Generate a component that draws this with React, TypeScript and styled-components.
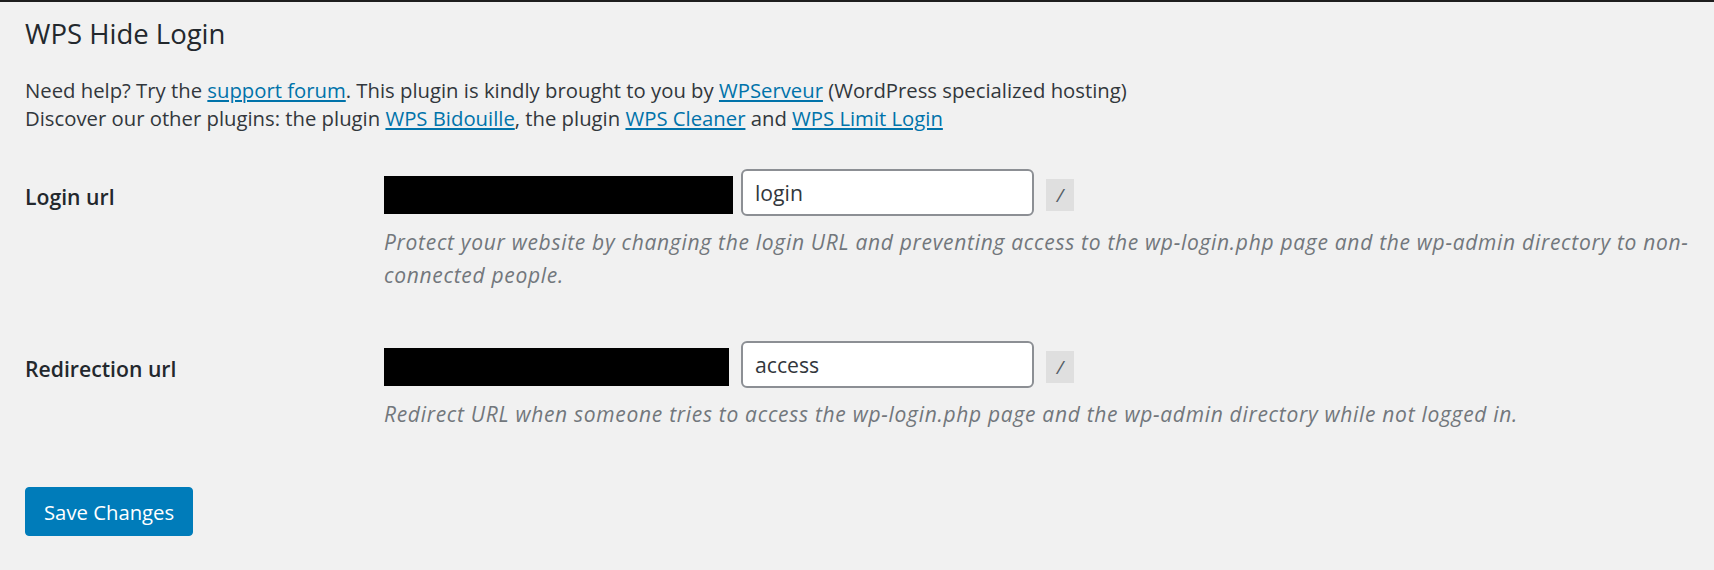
import React from "react";
import styled, { createGlobalStyle } from "styled-components";

const GlobalStyle = createGlobalStyle`
  html, body {
    margin: 0;
    padding: 0;
    background: #f1f1f1;
  }
  body {
    font-family: "Open Sans", "Noto Sans", "Liberation Sans", sans-serif;
    color: #23282d;
  }
  * { box-sizing: border-box; }
`;

const Page = styled.div`
  border-top: 2px solid #1e1e1e;
  padding: 0 6px 40px 25px;
  min-height: 570px;
`;

const Title = styled.h1`
  margin: 16px 0 0;
  font-size: 27.5px;
  line-height: 32px;
  font-weight: 400;
  color: #23282d;
`;

const Intro = styled.p`
  margin: 26px 0 0;
  font-size: 20.3px;
  line-height: 28px;
  color: #32373c;
`;

const Link = styled.a`
  color: #0073aa;
  text-decoration: underline;
`;

const FormTable = styled.div`
  display: flex;
  flex-direction: column;
`;

const Row = styled.div<{ $top: number }>`
  display: flex;
  margin-top: ${(p) => p.$top}px;
`;

const Label = styled.label`
  width: 359px;
  flex: none;
  padding-top: 15px;
  font-size: 21.2px;
  line-height: 26px;
  font-weight: 600;
  color: #23282d;
`;

const Field = styled.div`
  flex: 1;
  min-width: 0;
`;

const FieldLine = styled.div`
  display: flex;
  align-items: flex-start;
`;

const Redacted = styled.span<{ $w: number }>`
  display: block;
  width: ${(p) => p.$w}px;
  height: 38px;
  margin-top: 7px;
  background: #000;
`;

const TextInput = styled.input<{ $gap: number }>`
  width: 293px;
  height: 47px;
  margin: 0 0 0 ${(p) => p.$gap}px;
  padding: 0 12px;
  border: 2px solid #8c8f94;
  border-radius: 6px;
  background: #fff;
  font-family: "Open Sans", "Noto Sans", sans-serif;
  font-size: 21.2px;
  color: #32373c;
  outline: none;
`;

const Slash = styled.span`
  display: inline-flex;
  align-items: center;
  justify-content: center;
  width: 28px;
  height: 32px;
  margin: 10px 0 0 12px;
  background: #dfdfdf;
  color: #555d66;
  font-size: 19px;
  font-style: italic;
`;

const Description = styled.p`
  margin: 10px 0 0;
  font-size: 21px;
  letter-spacing: 0.7px;
  line-height: 33px;
  font-style: italic;
  color: #72777c;
`;

const SaveButton = styled.button`
  margin-top: 56px;
  height: 49px;
  padding: 0 18px;
  background: #007cba;
  border: 1px solid #007cba;
  border-radius: 4px;
  color: #fff;
  font-family: "Open Sans", "Noto Sans", sans-serif;
  font-size: 20.3px;
  cursor: pointer;
`;

export default function App() {
  return (
    <>
      <GlobalStyle />
      <Page>
        <Title>WPS Hide Login</Title>
        <Intro>
          Need help? Try the <Link href="#">support forum</Link>. This plugin is kindly brought to you by{" "}
          <Link href="#">WPServeur</Link> (WordPress specialized hosting)
          <br />
          Discover our other plugins: the plugin <Link href="#">WPS Bidouille</Link>, the plugin{" "}
          <Link href="#">WPS Cleaner</Link> and <Link href="#">WPS Limit Login</Link>
        </Intro>
        <FormTable>
          <Row $top={37}>
            <Label>Login url</Label>
            <Field>
              <FieldLine>
                <Redacted $w={349} />
                <TextInput $gap={8} defaultValue="login" />
                <Slash>/</Slash>
              </FieldLine>
              <Description>
                Protect your website by changing the login URL and preventing access to the wp-login.php page and the
                wp-admin directory to non-<wbr />connected people.
              </Description>
            </Field>
          </Row>
          <Row $top={49}>
            <Label>Redirection url</Label>
            <Field>
              <FieldLine>
                <Redacted $w={345} />
                <TextInput $gap={12} defaultValue="access" />
                <Slash>/</Slash>
              </FieldLine>
              <Description>
                Redirect URL when someone tries to access the wp-login.php page and the wp-admin directory while not
                logged in.
              </Description>
            </Field>
          </Row>
        </FormTable>
        <SaveButton type="button">Save Changes</SaveButton>
      </Page>
    </>
  );
}
